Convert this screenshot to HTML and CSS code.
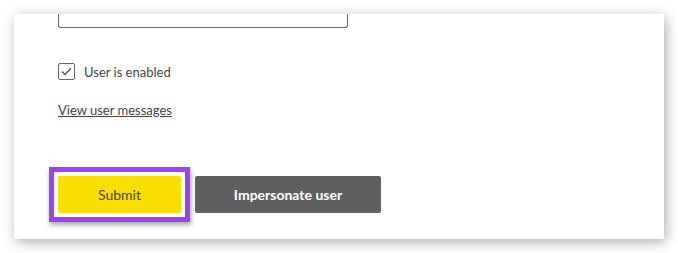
FILE: index.html
```html
<!DOCTYPE html>
<html lang="en">
<head>
    <meta charset="UTF-8">
    <meta name="viewport" content="width=device-width, initial-scale=1.0">
    <title>Edit user</title>
    <link rel="stylesheet" href="styles.css">
</head>
<body>

    <div class="card">
        <div class="text-input"></div>

        <label class="check-row">
            <span class="check-box">
                <svg width="11" height="9" viewBox="0 0 11 9"><path d="M1 4.5 L4 7.5 L10 1.2" fill="none" stroke="#555" stroke-width="1.3"/></svg>
            </span>
            <span class="check-label">User is enabled</span>
        </label>

        <a class="messages-link" href="#">View user messages</a>

        <div class="actions">
            <div class="focus-ring">
                <button class="btn btn-submit">Submit</button>
            </div>
            <button class="btn btn-dark">Impersonate user</button>
        </div>
    </div>

</body>
</html>
```

FILE: styles.css
```css
/* Reset */
* {
    margin: 0;
    padding: 0;
    box-sizing: border-box;
    font-family: Lato, "Liberation Sans", sans-serif;
}

body {
    background: #fff;
    padding: 14px;
}

/* Card */
.card {
    width: 650px;
    height: 225px;
    background: #fff;
    box-shadow: 2px 3px 12px rgba(0, 0, 0, 0.32);
    padding: 0 44px;
}

/* Input (top cut off) */
.text-input {
    width: 290px;
    height: 14px;
    border: 1px solid #666;
    border-top: none;
    border-radius: 0 0 3px 3px;
}

/* Checkbox */
.check-row {
    display: flex;
    align-items: center;
    gap: 9px;
    margin-top: 35px;
    font-size: 13px;
    color: #444;
}

.check-box {
    width: 17px;
    height: 17px;
    border: 1px solid #666;
    border-radius: 2px;
    display: flex;
    align-items: center;
    justify-content: center;
}

/* Link */
.messages-link {
    display: inline-block;
    margin-top: 22px;
    font-size: 13px;
    color: #444;
    text-decoration: underline;
}

/* Buttons */
.actions {
    display: flex;
    align-items: center;
    gap: 13px;
    margin-top: 58px;
}

.focus-ring {
    padding: 4px;
    border: 5px solid #a040f0;
    margin: -9px -8px -9px -9px;
    box-shadow: 1px 3px 5px rgba(0, 0, 0, 0.35);
    background: #fff;
    display: flex;
}

.btn {
    height: 37px;
    border: none;
    border-radius: 2px;
    font-size: 14px;
    cursor: pointer;
}

.btn-submit {
    width: 123px;
    background: #f9df00;
    color: #444;
}

.btn-dark {
    width: 186px;
    background: #606060;
    color: #fff;
    font-weight: bold;
}
```
